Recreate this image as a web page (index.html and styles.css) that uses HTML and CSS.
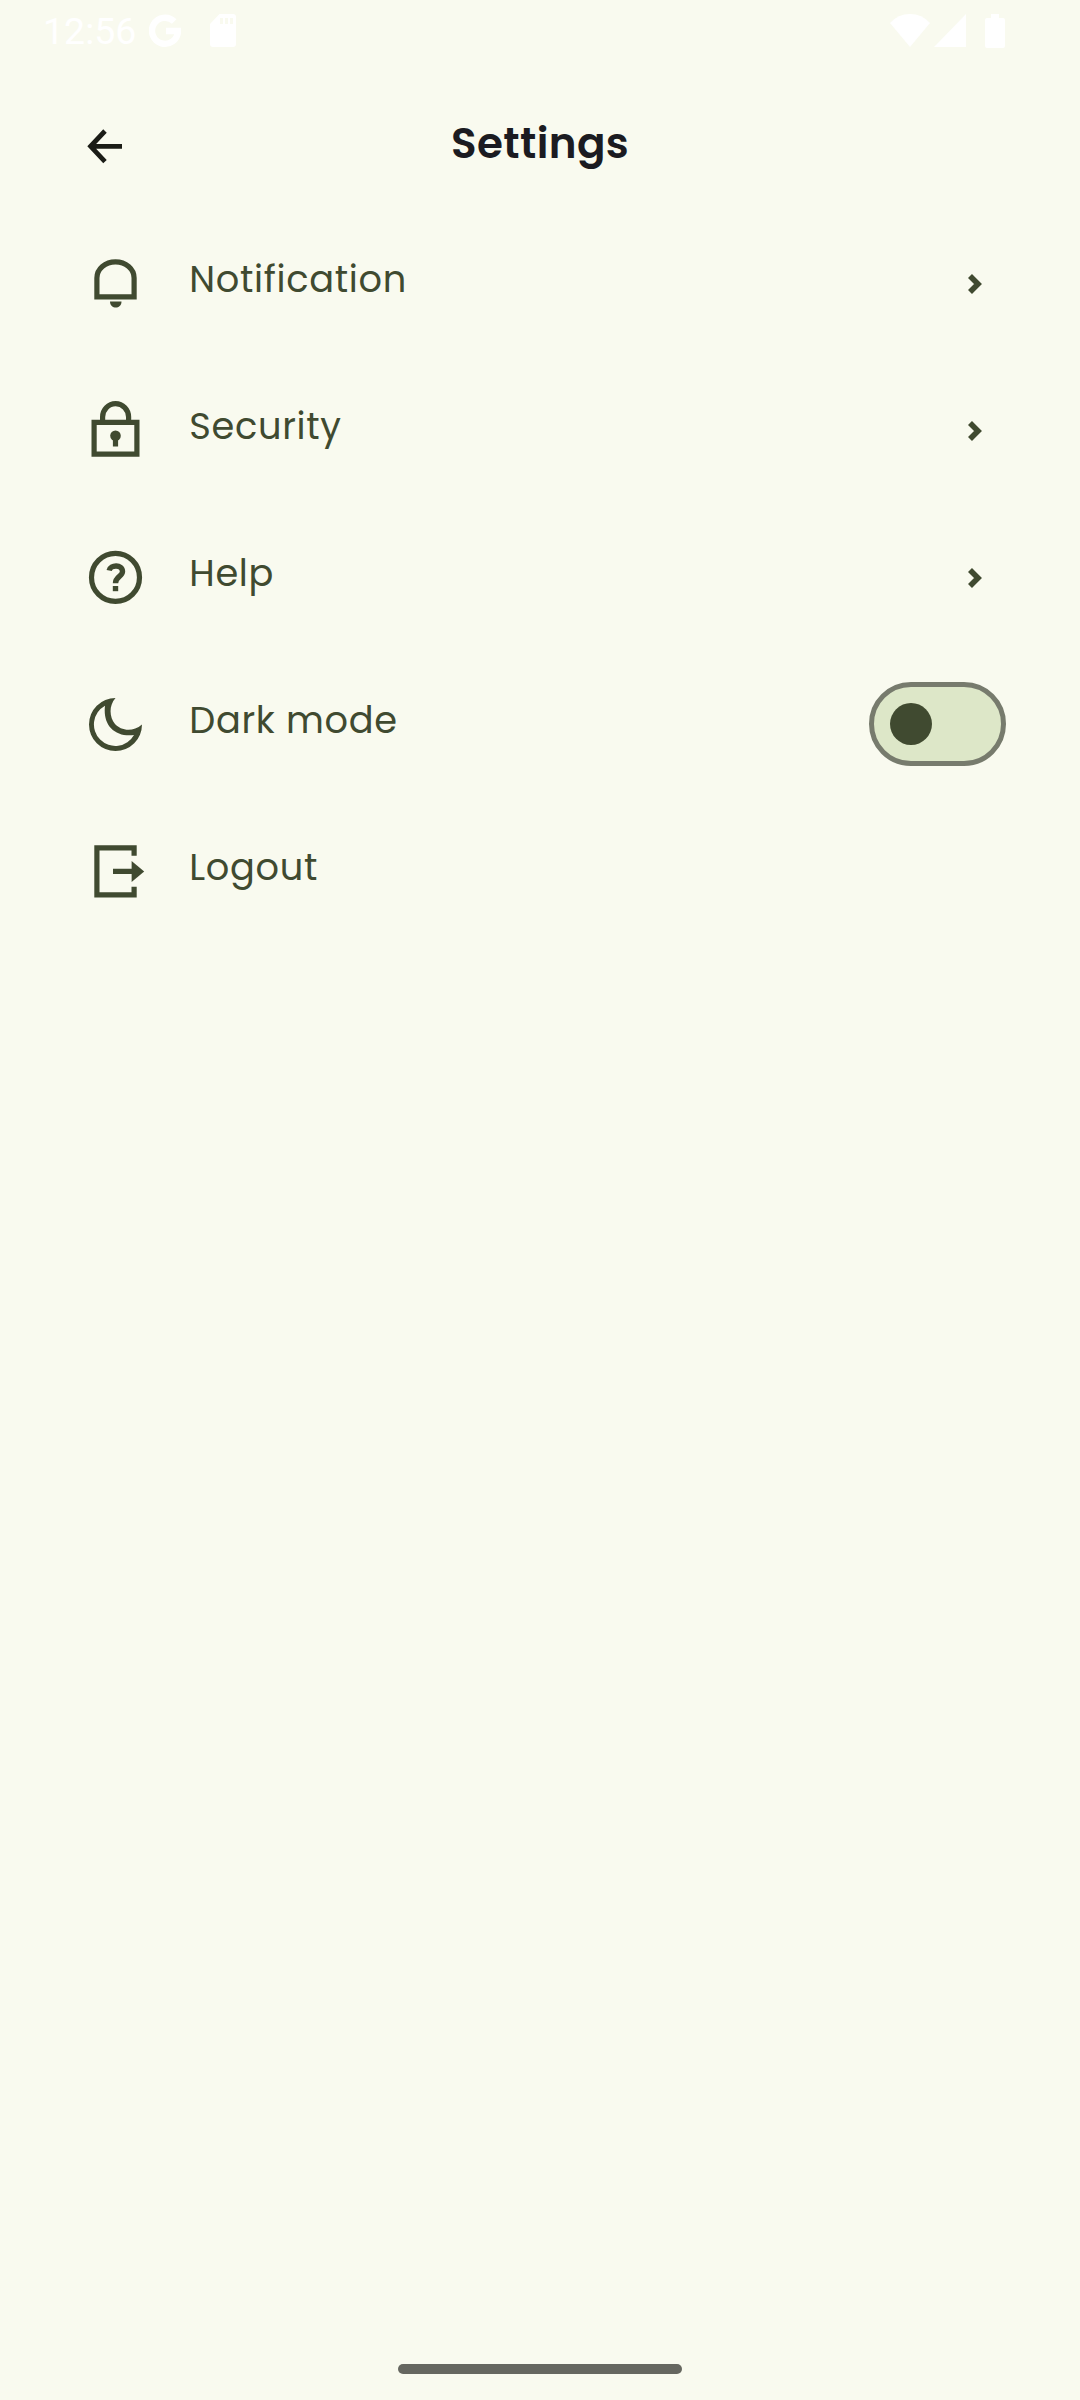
FILE: index.html
```html
<!DOCTYPE html>
<html lang="en">
<head>
<meta charset="utf-8">
<title>Settings</title>
<link rel="stylesheet" href="styles.css">
</head>
<body>
<div class="screen">
  <div class="status">
    <span class="clock">12:56</span>
    <svg class="google" width="32" height="34" viewBox="0 0 32 34"><path d="M25.2 7.6A13 13 0 1 0 29 17H17" fill="none" stroke="currentColor" stroke-width="6.4"/></svg>
    <svg class="sd" width="26" height="34" viewBox="0 0 26 34"><path fill-rule="evenodd" d="M9.5 0H23a3 3 0 0 1 3 3v27a3 3 0 0 1-3 3H3a3 3 0 0 1-3-3V10zM10 4v6h3V4zm5 0v6h3V4zm5 0v6h3V4z" fill="currentColor"/></svg>
    <svg class="wifi" width="40" height="34" viewBox="0 0 40 34"><path d="M0 9Q8 0 20 0t20 9L20 33z" fill="currentColor"/></svg>
    <svg class="signal" width="32" height="34" viewBox="0 0 32 34"><path d="M32 0v33H0z" fill="currentColor"/></svg>
    <svg class="battery" width="20" height="34" viewBox="0 0 20 34"><path d="M6 0h8v4h4a2 2 0 0 1 2 2v26a2 2 0 0 1-2 2H2a2 2 0 0 1-2-2V6a2 2 0 0 1 2-2h4z" fill="currentColor"/></svg>
  </div>
  <header class="header">
    <svg class="back" width="42" height="42" viewBox="0 0 42 42"><path d="M38 21.3H5.5M21 6 6.6 21.3 21 36.6" fill="none" stroke="currentColor" stroke-width="4.8"/></svg>
    <h1 class="title">Settings</h1>
  </header>
  <main class="list">
    <div class="row">
      <svg class="icon" viewBox="0 0 63 63"><path d="M12.9 44.9V26a18.6 16.2 0 0 1 37.2 0v18.9z" fill="none" stroke="currentColor" stroke-width="5.2"/><path d="M26 49.5h11.5c0 8-11.5 8-11.5 0z" fill="currentColor"/></svg>
      <span class="label">Notification</span>
      <svg class="chevron" viewBox="0 0 24 24"><path d="m4 4 8 8-8 8" fill="none" stroke="currentColor" stroke-width="5.6"/></svg>
    </div>
    <div class="row">
      <svg class="icon" viewBox="0 0 63 63"><path d="M10.1 23.3h42.8v31.8H10.1zM18.6 23v-5a13 13.3 0 0 1 26 0v5" fill="none" stroke="currentColor" stroke-width="5.2"/><circle cx="31.5" cy="36.7" r="5.3" fill="currentColor"/><path d="M28.9 37h5.2v10.6h-5.2z" fill="currentColor"/></svg>
      <span class="label">Security</span>
      <svg class="chevron" viewBox="0 0 24 24"><path d="m4 4 8 8-8 8" fill="none" stroke="currentColor" stroke-width="5.6"/></svg>
    </div>
    <div class="row">
      <svg class="icon" viewBox="0 0 63 63"><circle cx="31.5" cy="31.4" r="24" fill="none" stroke="currentColor" stroke-width="5.2"/><path d="M25.2 24.5c1-6 13.3-6.5 13.3 1 0 5-7 5-7 11.8" fill="none" stroke="currentColor" stroke-width="5.4"/><path d="M28.8 40h5.4v5.2h-5.4z" fill="currentColor"/></svg>
      <span class="label">Help</span>
      <svg class="chevron" viewBox="0 0 24 24"><path d="m4 4 8 8-8 8" fill="none" stroke="currentColor" stroke-width="5.6"/></svg>
    </div>
    <div class="row">
      <svg class="icon" viewBox="0 0 63 63"><path fill-rule="evenodd" d="M31.5 5A26.5 26.5 0 1 0 58 31.5C48 40 36.500 37 31 31 25.500 24.500 24.500 13 31.500 5zM21 12.800C20 21 21.500 29.500 27 35.200 32.500 41 41 43.300 50 42A21.400 21.400 0 1 1 21 12.800z" fill="currentColor"/></svg>
      <span class="label">Dark mode</span>
      <span class="toggle"><span class="thumb"></span></span>
    </div>
    <div class="row">
      <svg class="icon" viewBox="0 0 63 63"><path d="M50.1 15.7V7.9H12.9v47h37.2v-8.2M29 31.3h20" fill="none" stroke="currentColor" stroke-width="5.2"/><path d="m47.6 21 12.6 10.4L47.6 42z" fill="currentColor"/></svg>
      <span class="label">Logout</span>
    </div>
  </main>
  <div class="nav"><span class="handle"></span></div>
</div>
</body>
</html>
```
FILE: styles.css
```css
* { box-sizing: border-box; }
body { margin: 0; background: #f9faef; }
svg { display: block; flex: none; }
.screen {
  width: 1080px;
  height: 2400px;
  display: flex;
  flex-direction: column;
  background: #f9faef;
  font-family: Poppins, Inter, "Open Sans", sans-serif;
}
.status {
  height: 62px;
  padding: 0 75px 0 43px;
  display: flex;
  align-items: center;
  color: #fff;
}
.clock { width: 106px; font: 37.5px/62px Roboto, sans-serif; white-space: nowrap; }
.sd { margin-left: 29px; }
.wifi { margin-left: auto; }
.signal { margin-left: 4px; }
.battery { margin-left: 19px; }
.header {
  height: 147px;
  padding: 0 84px;
  display: grid;
  grid-template-columns: 42px 1fr 42px;
  align-items: start;
}
.back { margin-top: 63px; color: #1b1c16; }
.title {
  margin: 58px 0 0;
  font-size: 42px;
  line-height: 48px;
  font-weight: 600;
  letter-spacing: 0.4px;
  text-align: center;
  color: #1b1b21;
}
.list { flex: 1; padding: 0 74px 0 84px; }
.row { height: 147px; display: flex; align-items: center; color: #404a30; }
.icon { width: 63px; height: 63px; margin-top: 2px; }
.label {
  margin-left: 42.3px;
  margin-top: -8px;
  font-size: 36.75px;
  line-height: 48px;
  letter-spacing: 0.68px;
  white-space: nowrap;
}
.chevron { width: 24px; height: 24px; margin: 2px 16px 0 auto; }
.toggle {
  width: 137px;
  height: 84px;
  margin-left: auto;
  padding-left: 16px;
  display: flex;
  align-items: center;
  border: 5px solid #777b6d;
  border-radius: 42px;
  background: #dde7c8;
}
.thumb { width: 42px; height: 42px; border-radius: 50%; background: #404a30; }
.nav { height: 36px; display: flex; justify-content: center; }
.handle { width: 284px; height: 10px; border-radius: 5px; background: #666760; }
```
